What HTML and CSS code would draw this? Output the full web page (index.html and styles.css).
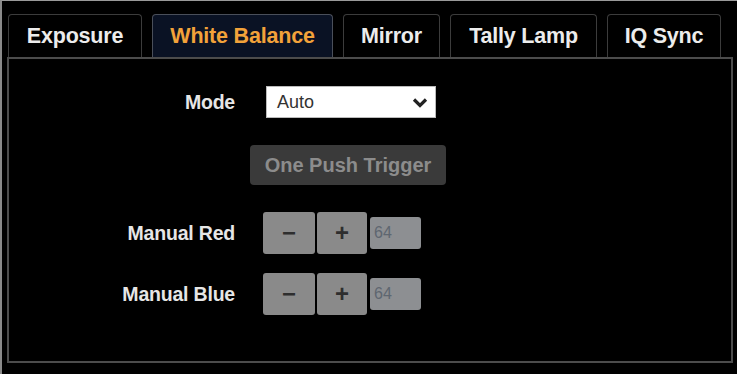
FILE: index.html
```html
<!DOCTYPE html>
<html>
<head>
<meta charset="utf-8">
<link rel="stylesheet" href="styles.css">
</head>
<body>
<div class="frame">
  <div class="tabs">
    <div class="tab">Exposure</div>
    <div class="tab active">White Balance</div>
    <div class="tab">Mirror</div>
    <div class="tab">Tally Lamp</div>
    <div class="tab">IQ Sync</div>
  </div>
  <div class="panel">
    <div class="form">
      <div class="label">Mode</div>
      <div class="select">
        <span>Auto</span>
        <svg class="chev" width="16" height="11" viewBox="0 0 16 11"><path d="M2 2.5 L8 8.5 L14 2.5" fill="none" stroke="#222" stroke-width="3.2"/></svg>
      </div>

      <div class="label"></div>
      <div class="trigger">One Push Trigger</div>

      <div class="label">Manual Red</div>
      <div class="stepper">
        <div class="btn">−</div>
        <div class="btn">+</div>
        <div class="val">64</div>
      </div>

      <div class="label">Manual Blue</div>
      <div class="stepper">
        <div class="btn">−</div>
        <div class="btn">+</div>
        <div class="val">64</div>
      </div>
    </div>
  </div>
</div>
</body>
</html>
```
FILE: styles.css
```css
html, body {
  margin: 0;
  padding: 0;
  background: #000;
}
body {
  width: 737px;
  height: 374px;
  overflow: hidden;
  font-family: "Liberation Sans", Arial, sans-serif;
}
.frame {
  box-sizing: border-box;
  height: 374px;
  border-top: 1px solid #9a9a9a;
  border-left: 2px solid #8a8a8a;
  padding: 13px 0 0 5px;
}
.tabs {
  display: flex;
  gap: 10px;
  margin-left: 1px;
}
.tab {
  box-sizing: border-box;
  height: 43px;
  border: 1.5px solid #3c3c3c;
  border-bottom: none;
  border-radius: 4px 4px 0 0;
  color: #ececec;
  font-weight: bold;
  font-size: 21.5px;
  display: flex;
  align-items: center;
  justify-content: center;
  letter-spacing: -0.2px;
}
.tab:nth-child(1) { width: 134px; }
.tab:nth-child(2) { width: 181px; }
.tab:nth-child(3) { width: 97px; }
.tab:nth-child(4) { width: 147px; }
.tab:nth-child(5) { width: 114px; }
.tab.active {
  background: #0a1224;
  border-color: #4a4f5a;
  color: #f2a23a;
}
.panel {
  box-sizing: border-box;
  width: 726px;
  height: 306px;
  border: 2px solid #4c4c4c;
  padding-top: 27px;
}
.form {
  display: grid;
  grid-template-columns: 226px auto;
  column-gap: 31px;
  row-gap: 27px;
  align-items: center;
}
.label {
  text-align: right;
  color: #e6e6e6;
  font-weight: bold;
  font-size: 19.5px;
  letter-spacing: -0.2px;
}
.select {
  box-sizing: border-box;
  width: 170px;
  height: 32px;
  background: #fff;
  border: 1px solid #bbb;
  display: flex;
  align-items: center;
  justify-content: space-between;
  padding: 0 7px 0 10px;
  color: #333;
  font-size: 18px;
}
.trigger {
  box-sizing: border-box;
  width: 196px;
  height: 40px;
  margin-left: -16px;
  background: #3a3a3a;
  border-radius: 4px;
  color: #8c8c8c;
  font-weight: bold;
  font-size: 20px;
  display: flex;
  align-items: center;
  justify-content: center;
}
.stepper {
  display: flex;
  align-items: center;
  gap: 2px;
  margin-left: -3px;
}
.stepper + .label {
  margin-top: -8px;
}
.stepper:last-child {
  margin-top: -8px;
}
.btn {
  width: 52px;
  height: 42px;
  background: #8a8a8a;
  border-radius: 3px;
  color: #2e2e2e;
  font-weight: bold;
  font-size: 24px;
  display: flex;
  align-items: center;
  justify-content: center;
}
.btn + .btn {
  width: 50px;
}
.val {
  box-sizing: border-box;
  width: 51px;
  height: 32px;
  margin-left: 1px;
  background: #8d8f92;
  border-radius: 3px;
  color: #5e6670;
  font-size: 16px;
  padding-left: 4px;
  display: flex;
  align-items: center;
}
```
